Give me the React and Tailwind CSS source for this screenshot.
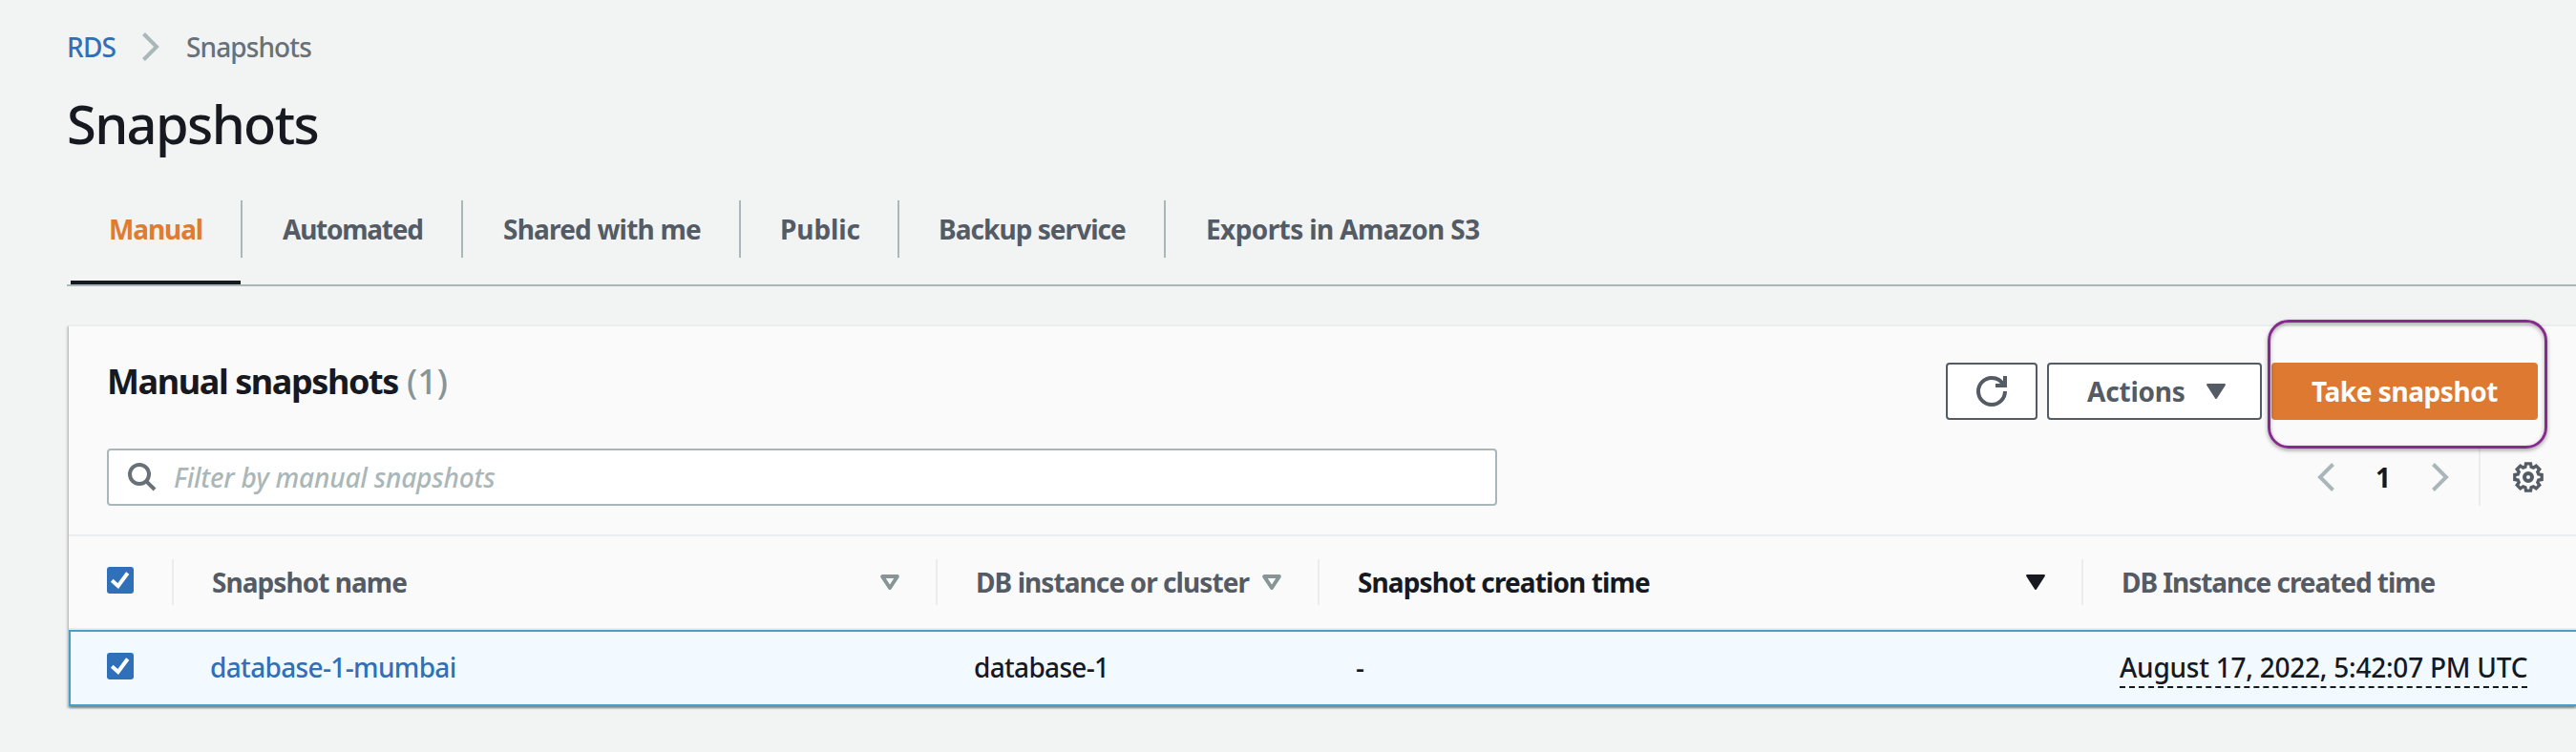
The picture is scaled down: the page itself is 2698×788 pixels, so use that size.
const GEAR_POINTS = Array.from({ length: 8 }, (_, i) => i * 45)
  .flatMap((a) => [[a - 16, 11.2], [a - 10, 14.4], [a + 10, 14.4], [a + 16, 11.2]])
  .map(([deg, r]) => {
    const t = (deg * Math.PI) / 180;
    return `${(16 + r * Math.cos(t)).toFixed(2)},${(16 + r * Math.sin(t)).toFixed(2)}`;
  })
  .join(" ");

function Chevron({ className = "" }) {
  return (
    <svg viewBox="0 0 18 30" className={`h-[30px] w-[18px] shrink-0 fill-none stroke-[#aab7b8] stroke-4 ${className}`}>
      <path d="M1.5 1.5 15 15 1.5 28.5" />
    </svg>
  );
}

function SortIcon({ className = "" }) {
  return (
    <svg viewBox="0 0 20 16" className={`h-4 w-5 shrink-0 ${className}`}>
      <path d="M2.2 2.1h15.6L10 14z" fill="none" stroke="#879596" strokeWidth="4" strokeLinejoin="round" />
      <path d="M6.2 4h7.6L10 10.2z" fill="#fafafa" />
    </svg>
  );
}

function SolidTriangle({ className = "" }) {
  return (
    <svg viewBox="0 0 20 16" className={`h-4 w-5 shrink-0 fill-current ${className}`}>
      <path d="M1.3 0h17.4c1 0 1.6 1.100.9 1.900L10.900 15.500a1.100 1.100 0 0 1-1.800 0L.4 1.900C-.2 1.100.3 0 1.300 0z" />
    </svg>
  );
}

function Checkbox() {
  return (
    <span className="flex size-7 shrink-0 rounded-[3px] bg-[#2f70b8]">
      <svg viewBox="0 0 28 28" className="size-7 fill-none stroke-white stroke-4">
        <path d="M5.200 14.300 11.700 20 21.700 6.500" />
      </svg>
    </span>
  );
}

function Divider({ className = "" }) {
  return <span className={`w-[2px] shrink-0 ${className}`} />;
}

const tabs = [
  { label: "Manual", active: true, className: "w-[178px] pl-[40px] tracking-[-1.1px]" },
  { label: "Automated", className: "w-[229px] pl-[42px] tracking-[-1.25px]" },
  { label: "Shared with me", className: "w-[289px] pl-[42px] tracking-[-0.8px]" },
  { label: "Public", className: "w-[164px] pl-[41px] tracking-[-0.1px]" },
  { label: "Backup service", className: "w-[277px] pl-[41px] tracking-[-0.95px]" },
  { label: "Exports in Amazon S3", className: "w-[340px] pl-[42px] tracking-[-0.6px]" },
];

function Tabs() {
  return (
    <nav className="mt-[46px] flex h-[90px] border-b-2 border-[#aab7b8] pl-1 font-bold">
      {tabs.map((tab, i) => (
        <div key={tab.label} className="flex">
          <div
            className={`h-[88px] border-b-4 leading-[60px] whitespace-nowrap ${
              tab.active ? "border-[#16191f] text-[#e07b30]" : "border-transparent text-[#545b64]"
            } ${tab.className}`}
          >
            {tab.label}
          </div>
          {i < tabs.length - 1 && <Divider className="h-[60px] bg-[#aab7b8]" />}
        </div>
      ))}
    </nav>
  );
}

function Toolbar() {
  return (
    <div className="border-b-2 border-[#eaeded] pt-[38px] pb-[30px] pl-10">
      <div className="flex items-start justify-between pr-10">
        <h2 className="text-[36px] leading-10 font-bold tracking-[-1.4px] whitespace-nowrap text-[#16191f]">
          Manual snapshots <span className="pl-px font-medium tracking-normal text-[#879596]">(1)</span>
        </h2>
        <div className="flex gap-[10px] font-bold text-[#545b64]">
          <button className="flex h-[60px] w-24 items-center justify-center rounded-[4px] border-2 border-[#545b64] bg-white">
            <svg viewBox="0 0 16 16" className="size-8 fill-none stroke-current stroke-2">
              <path d="M15 8c0 3.870-3.130 7-7 7s-7-3.130-7-7 3.130-7 7-7c2.790 0 5.200 1.630 6.330 4M10 5h5V0" />
            </svg>
          </button>
          <button className="flex h-[60px] w-[225px] items-center rounded-[4px] border-2 border-[#545b64] bg-white pl-10">
            <span className="w-[125px] text-left tracking-[-0.2px]">Actions</span>
            <SolidTriangle />
          </button>
          <div className="relative">
            <button className="h-[60px] w-[279px] rounded-[4px] bg-[#dd7930] tracking-[-0.45px] text-white">
              Take snapshot
            </button>
            <div className="absolute -top-[45px] -left-[4px] h-[135px] w-[293px] rounded-[22px] border-3 border-[#872a8f] shadow-[0_2px_4px_rgba(0,0,0,0.35),inset_0_2px_4px_rgba(0,0,0,0.3)]" />
          </div>
        </div>
      </div>
      <div className="mt-[30px] flex items-center justify-between pr-[34px]">
        <div className="flex h-[60px] w-[1456px] items-center rounded-[4px] border-2 border-[#aab7b8] bg-white pl-5">
          <svg viewBox="0 0 30 30" className="size-[30px] fill-none stroke-[#687078] stroke-4">
            <circle cx="12" cy="12" r="10" />
            <path d="M18.800 18.800 28 28" />
          </svg>
          <span className="pl-[18px] font-medium tracking-[-0.2px] text-[#aab7b8] italic">Filter by manual snapshots</span>
        </div>
        <div className="flex items-center">
          <Chevron className="rotate-180" />
          <span className="w-[102px] text-center font-bold text-[#16191f]">1</span>
          <Chevron />
          <Divider className="ml-[31px] h-[60px] bg-[#eaeded]" />
          <svg viewBox="0 0 32 32" className="ml-[34px] size-8 fill-none stroke-[#545b64]">
            <polygon points={GEAR_POINTS} strokeWidth="3.300" />
            <circle cx="16" cy="16" r="4" strokeWidth="4" />
          </svg>
        </div>
      </div>
    </div>
  );
}

const columns = "grid grid-cols-[108px_800px_400px_800px_518px] items-center whitespace-nowrap";

function SnapshotTable() {
  return (
    <div>
      <div className={`${columns} h-[98px] border-b-2 border-[#eaeded] font-bold text-[#545b64]`}>
        <div className="flex h-12 items-start pt-2 pl-10">
          <Checkbox />
        </div>
        <div className="flex h-12 items-center">
          <Divider className="h-12 bg-[#eaeded]" />
          <span className="w-[740px] pl-[40px] tracking-[-0.95px]">Snapshot name</span>
          <SortIcon />
        </div>
        <div className="flex h-12 items-center">
          <Divider className="h-12 bg-[#eaeded]" />
          <span className="w-[340px] pl-[40px] tracking-[-0.92px]">DB instance or cluster</span>
          <SortIcon />
        </div>
        <div className="flex h-12 items-center text-[#16191f]">
          <Divider className="h-12 bg-[#eaeded]" />
          <span className="w-[740px] pl-[40px] tracking-[-0.88px]">Snapshot creation time</span>
          <SolidTriangle />
        </div>
        <div className="flex h-12 items-center">
          <Divider className="h-12 bg-[#eaeded]" />
          <span className="pl-[40px] tracking-[-1.05px]">DB Instance created time</span>
        </div>
      </div>
      <div className={`${columns} h-20 border-y-2 border-l-2 border-[#479fc5] bg-[#f3faff] font-medium text-[#16191f]`}>
        <div className="pb-1 pl-[38px]">
          <Checkbox />
        </div>
        <a className="pb-[2px] pl-[38px] tracking-[-0.65px] text-[#2f70b8]">database-1-mumbai</a>
        <span className="pb-[2px] pl-[38px] tracking-[-0.68px]">database-1</span>
        <span className="pb-[2px] pl-[38px]">-</span>
        <span className="pl-[38px]">
          <span className="inline-block border-b-2 border-dashed border-[#16191f] leading-[40px] tracking-[-0.24px]">
            August 17, 2022, 5:42:07 PM UTC
          </span>
        </span>
      </div>
    </div>
  );
}

export default function App() {
  return (
    <main className="h-[788px] w-full overflow-hidden bg-[#f2f3f3] pt-[29px] pl-[70px] font-['Noto_Sans',sans-serif] text-[28px] leading-10">
      <div className="flex h-10 items-center font-medium">
        <a className="w-[79px] tracking-[-0.8px] text-[#2f70b8]">RDS</a>
        <Chevron />
        <span className="pl-[28px] tracking-[-0.9px] text-[#687078]">Snapshots</span>
      </div>
      <h1 className="mt-[24px] mb-[-1px] text-[56px] leading-[72px] font-medium tracking-[-1.65px] text-[#16191f]">Snapshots</h1>
      <Tabs />
      <section className="mt-10 ml-[2px] border-t-2 border-[#eaeded] bg-[#fafafa] shadow-[0_2px_2px_0_rgba(0,28,36,0.3),2px_2px_2px_0_rgba(0,28,36,0.15),-2px_2px_2px_0_rgba(0,28,36,0.15)]">
        <Toolbar />
        <SnapshotTable />
      </section>
    </main>
  );
}
